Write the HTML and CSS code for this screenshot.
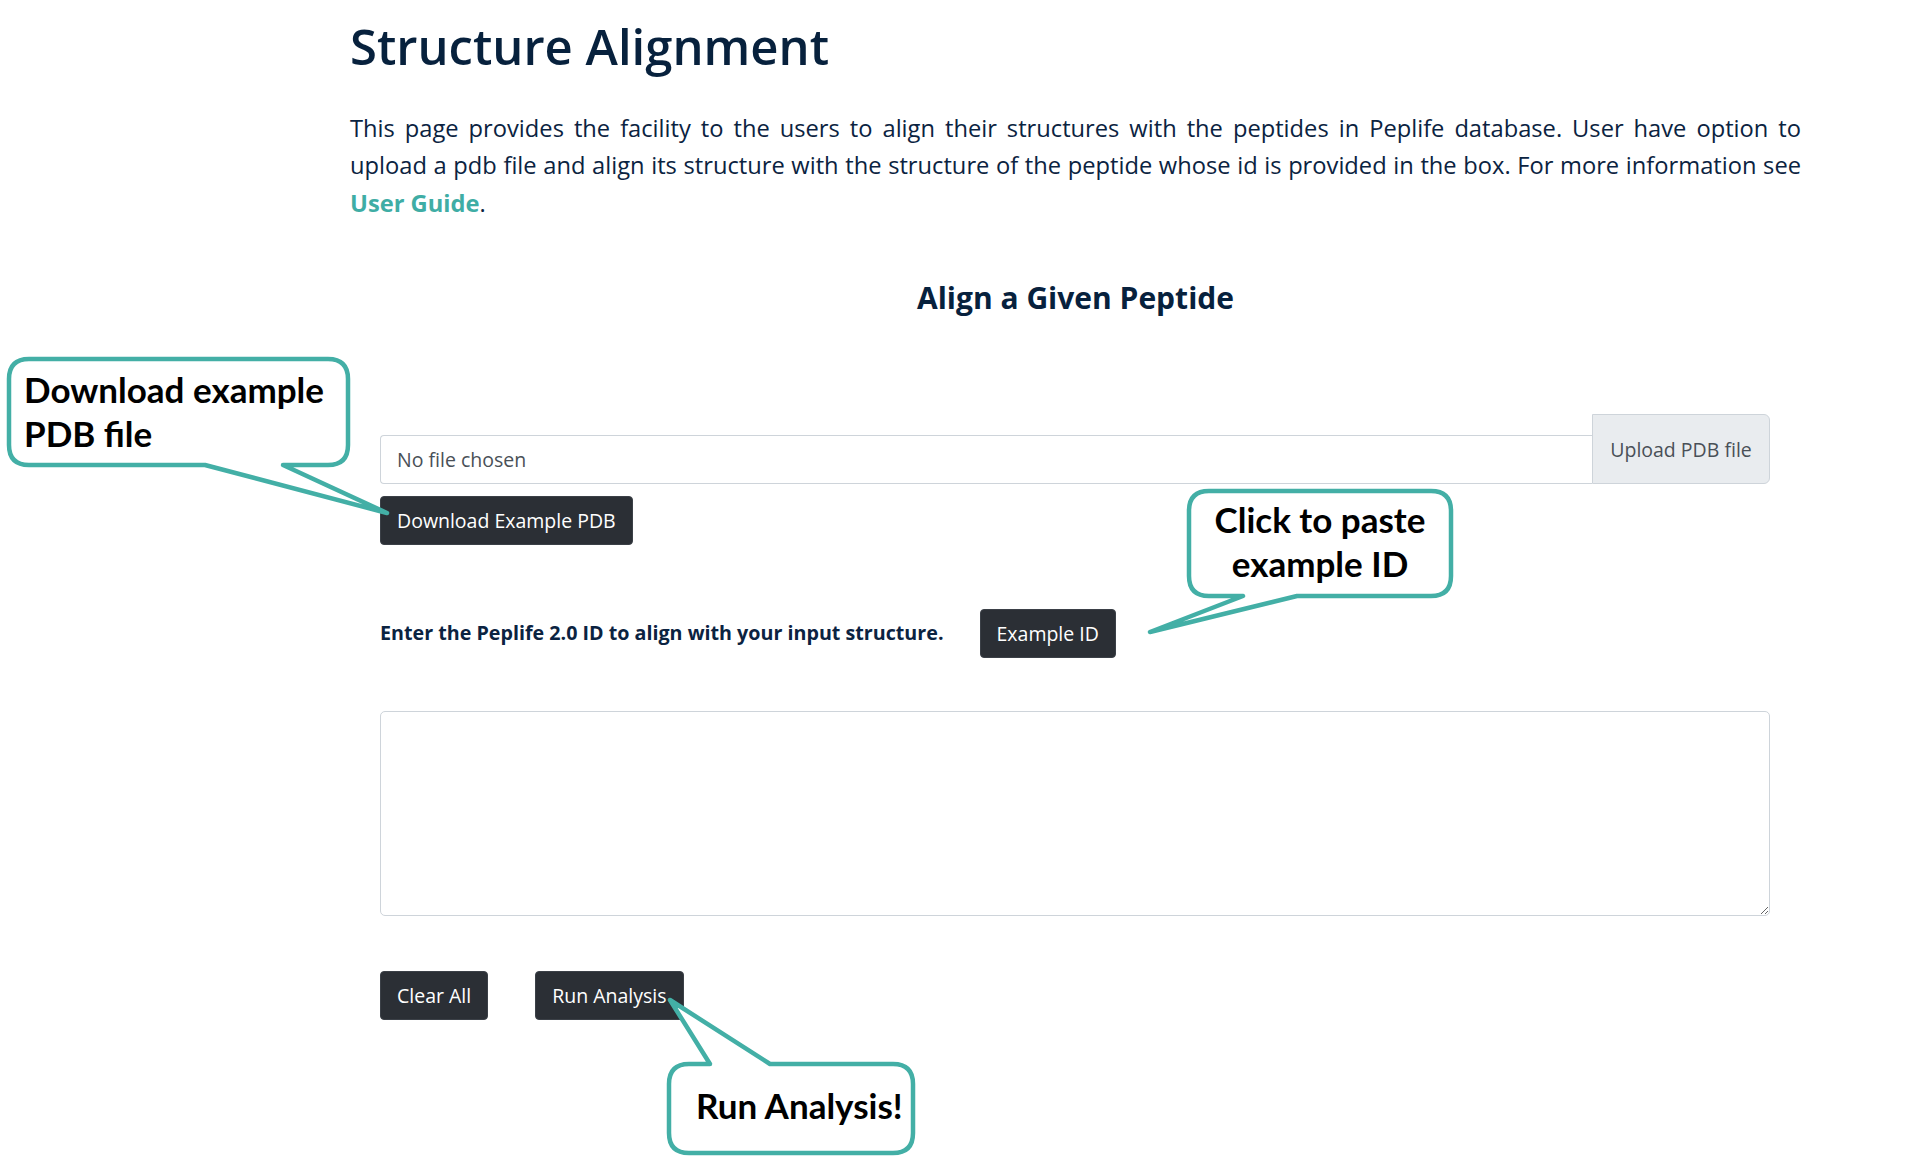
FILE: index.html
```html
<!DOCTYPE html>
<html lang="en">
<head>
<meta charset="utf-8">
<title>Structure Alignment</title>
<link rel="stylesheet" href="styles.css">
</head>
<body>
<main class="page">
  <h1 class="title">Structure Alignment</h1>
  <p class="intro">This page provides the facility to the users to align their structures with the peptides in Peplife database. User have option to upload a pdb file and align its structure with the structure of the peptide whose id is provided in the box. For more information see <a class="guide" href="#">User Guide</a>.</p>
  <h2 class="subtitle">Align a Given Peptide</h2>

  <form class="form">
    <div class="upload-row">
      <div class="file-field">No file chosen</div>
      <button type="button" class="btn-upload">Upload PDB file</button>
    </div>
    <div class="download-row">
      <button type="button" class="btn-dark">Download Example PDB</button>
    </div>
    <div class="id-row">
      <span class="id-label">Enter the Peplife 2.0 ID to align with your input structure.</span>
      <button type="button" class="btn-dark">Example ID</button>
    </div>
    <textarea class="seq-box"></textarea>
    <div class="actions">
      <button type="button" class="btn-dark">Clear All</button>
      <button type="button" class="btn-dark">Run Analysis</button>
    </div>
  </form>
</main>

<div class="callout callout-download">
  <svg class="callout-shape" width="400" height="170" viewBox="0 0 400 170">
    <path d="M29,9 H328 Q348,9 348,29 V95 Q348,115 328,115 H283 L387,163 L205,115 H29 Q9,115 9,95 V29 Q9,9 29,9 Z"/>
  </svg>
  <div class="callout-text text-download">Download example<br>PDB file</div>
</div>

<div class="callout callout-example">
  <svg class="callout-shape" width="330" height="170" viewBox="0 0 330 170">
    <path d="M69,11 H291 Q311,11 311,31 V96 Q311,116 291,116 H157 L10,152 L103,116 H69 Q49,116 49,96 V31 Q49,11 69,11 Z"/>
  </svg>
  <div class="callout-text text-example">Click to paste<br>example ID</div>
</div>

<div class="callout callout-run">
  <svg class="callout-shape" width="280" height="167" viewBox="0 0 280 167">
    <path d="M39,74 H60 L20,10 L120,74 H243 Q263,74 263,94 V143 Q263,163 243,163 H39 Q19,163 19,143 V94 Q19,74 39,74 Z"/>
  </svg>
  <div class="callout-text text-run">Run Analysis!</div>
</div>
</body>
</html>
```

FILE: styles.css
```css
html, body {
  margin: 0;
  padding: 0;
  background: #ffffff;
}

body {
  font-family: "Open Sans", "Noto Sans", "DejaVu Sans", sans-serif;
  color: #0b2341;
  width: 1910px;
  height: 1157px;
  overflow: hidden;
  position: relative;
}

.page {
  width: 1451px;
  margin-left: 350px;
  padding-top: 17px;
}

.title {
  margin: 0;
  font-size: 49px;
  line-height: 1.2;
  font-weight: 600;
  color: #07213d;
}

.intro {
  margin: 34px 0 0 0;
  font-size: 23.7px;
  line-height: 37.5px;
  text-align: justify;
  color: #0b2341;
}

.guide {
  color: #3fada5;
  font-weight: 700;
  text-decoration: none;
}

.subtitle {
  margin: 58px 0 0 0;
  font-size: 30px;
  line-height: 1.2;
  font-weight: 700;
  text-align: center;
  color: #07213d;
}

.form {
  margin: 98px 31px 0 30px;
  display: flex;
  flex-direction: column;
}

.upload-row {
  display: flex;
  align-items: flex-end;
}

.file-field {
  flex: 1;
  height: 49px;
  box-sizing: border-box;
  border: 1px solid #ced4da;
  border-right: none;
  border-radius: 4px 0 0 4px;
  padding: 0 16px;
  display: flex;
  align-items: center;
  font-size: 19.5px;
  color: #495057;
}

.btn-upload {
  width: 178px;
  height: 70px;
  box-sizing: border-box;
  border: 1px solid #ced4da;
  border-radius: 0 6px 6px 0;
  background: #e9ecef;
  color: #495057;
  font-family: inherit;
  font-size: 19.5px;
  padding: 0;
}

.download-row {
  margin-top: 12px;
  display: flex;
}

.btn-dark {
  height: 49px;
  box-sizing: border-box;
  padding: 0 16px;
  border: 1px solid #3b4047;
  border-radius: 4px;
  background: #2b2f35;
  color: #ffffff;
  font-family: inherit;
  font-size: 19.5px;
  white-space: nowrap;
}

.id-row {
  margin-top: 64px;
  display: flex;
  align-items: center;
  gap: 36px;
}

.id-label {
  font-size: 19.7px;
  font-weight: 700;
  color: #0b2341;
  padding-bottom: 3px;
}

.seq-box {
  margin-top: 53px;
  height: 205px;
  box-sizing: border-box;
  border: 1px solid #ced4da;
  border-radius: 5px;
  resize: vertical;
  font-family: inherit;
}

.actions {
  margin-top: 55px;
  display: flex;
  gap: 47px;
}

/* annotation callouts */
.callout {
  position: absolute;
}

.callout-shape {
  display: block;
}

.callout-shape path {
  fill: #ffffff;
  stroke: #43afa6;
  stroke-width: 4.5;
  stroke-linejoin: round;
}

.callout-text {
  position: absolute;
  font-family: "Lato", "Open Sans", sans-serif;
  font-weight: 700;
  font-size: 35px;
  line-height: 44px;
  color: #000000;
  white-space: nowrap;
}

.callout-download {
  left: 0;
  top: 350px;
}

.text-download {
  left: 24px;
  top: 17px;
}

.callout-example {
  left: 1140px;
  top: 480px;
}

.text-example {
  left: 49px;
  width: 262px;
  top: 17px;
  text-align: center;
}

.callout-run {
  left: 650px;
  top: 990px;
}

.text-run {
  left: 46px;
  top: 93px;
}
```
